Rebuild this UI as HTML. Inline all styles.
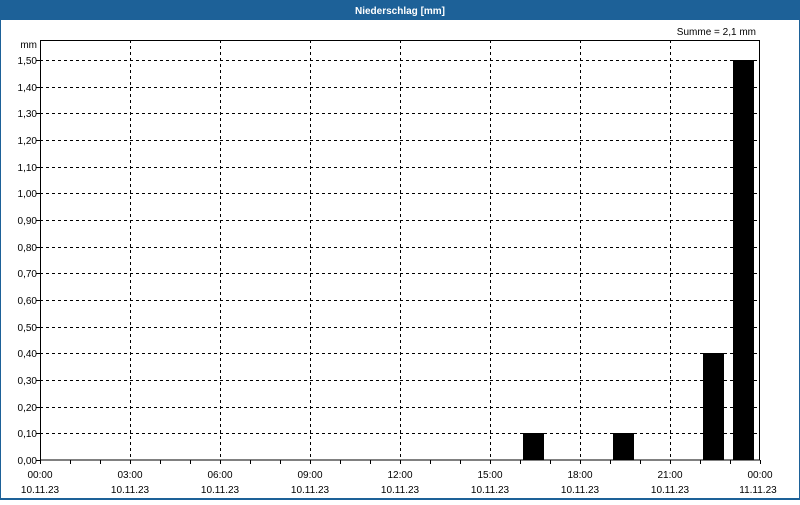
<!DOCTYPE html>
<html><head><meta charset="utf-8"><style>
body{margin:0;width:800px;height:500px;overflow:hidden;background:#fff}
svg text{font-family:"Liberation Sans",sans-serif;font-size:10px;fill:#000}
</style></head><body>
<svg width="800" height="500" xmlns="http://www.w3.org/2000/svg" shape-rendering="crispEdges">
<rect x="0" y="0" width="800" height="500" fill="#fff"/>
<rect x="0" y="0" width="800" height="20" fill="#1d6198"/>
<rect x="0" y="0" width="1" height="500" fill="#1d6198"/>
<rect x="799" y="0" width="1" height="500" fill="#1d6198"/>
<rect x="0" y="498" width="800" height="2" fill="#1d6198"/>
<text x="400" y="14" text-anchor="middle" style="fill:#fff;font-weight:bold;font-size:10px">Niederschlag [mm]</text>
<text x="756" y="35" text-anchor="end">Summe = 2,1 mm</text>
<text x="37" y="48" text-anchor="end">mm</text>
<g stroke="#000" stroke-width="1" stroke-dasharray="3,3" fill="none">
<path d="M40 60.5H760M40 87.5H760M40 113.5H760M40 140.5H760M40 167.5H760M40 193.5H760M40 220.5H760M40 247.5H760M40 273.5H760M40 300.5H760M40 327.5H760M40 353.5H760M40 380.5H760M40 407.5H760M40 433.5H760"/>
<path d="M130.5 40V460M220.5 40V460M310.5 40V460M400.5 40V460M490.5 40V460M580.5 40V460M670.5 40V460"/>
</g>
<g fill="#000">
<rect x="523" y="433" width="21" height="27"/>
<rect x="613" y="433" width="21" height="27"/>
<rect x="703" y="353" width="21" height="107"/>
<rect x="733" y="60" width="21" height="400"/>
</g>
<rect x="40.5" y="40.5" width="719" height="419.5" fill="none" stroke="#000"/>
<g stroke="#000">
<path d="M70.5 460V464M100.5 460V464M130.5 460V464M160.5 460V464M190.5 460V464M220.5 460V464M250.5 460V464M280.5 460V464M310.5 460V464M340.5 460V464M370.5 460V464M400.5 460V464M430.5 460V464M460.5 460V464M490.5 460V464M520.5 460V464M550.5 460V464M580.5 460V464M610.5 460V464M640.5 460V464M670.5 460V464M700.5 460V464M730.5 460V464M760.5 460V464M40.5 460V464"/>
<path d="M36 60.5H40M36 87.5H40M36 113.5H40M36 140.5H40M36 167.5H40M36 193.5H40M36 220.5H40M36 247.5H40M36 273.5H40M36 300.5H40M36 327.5H40M36 353.5H40M36 380.5H40M36 407.5H40M36 433.5H40M36 460.5H40"/>
</g>
<g text-anchor="end">
<text x="37" y="64">1,50</text><text x="37" y="91">1,40</text><text x="37" y="117">1,30</text>
<text x="37" y="144">1,20</text><text x="37" y="171">1,10</text><text x="37" y="197">1,00</text>
<text x="37" y="224">0,90</text><text x="37" y="251">0,80</text><text x="37" y="277">0,70</text>
<text x="37" y="304">0,60</text><text x="37" y="331">0,50</text><text x="37" y="357">0,40</text>
<text x="37" y="384">0,30</text><text x="37" y="411">0,20</text><text x="37" y="437">0,10</text>
<text x="37" y="464">0,00</text>
</g>
<g text-anchor="middle">
<text x="40" y="478">00:00</text><text x="40" y="493">10.11.23</text>
<text x="130" y="478">03:00</text><text x="130" y="493">10.11.23</text>
<text x="220" y="478">06:00</text><text x="220" y="493">10.11.23</text>
<text x="310" y="478">09:00</text><text x="310" y="493">10.11.23</text>
<text x="400" y="478">12:00</text><text x="400" y="493">10.11.23</text>
<text x="490" y="478">15:00</text><text x="490" y="493">10.11.23</text>
<text x="580" y="478">18:00</text><text x="580" y="493">10.11.23</text>
<text x="670" y="478">21:00</text><text x="670" y="493">10.11.23</text>
<text x="760" y="478">00:00</text><text x="758" y="493">11.11.23</text>
</g>
</svg>
</body></html>
